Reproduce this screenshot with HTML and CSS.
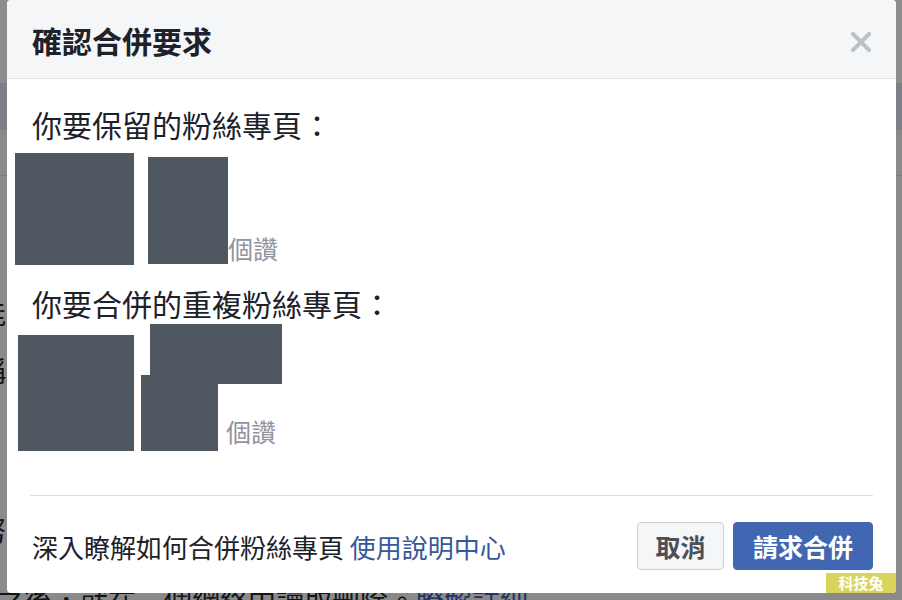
FILE: index.html
```html
<!DOCTYPE html>
<html lang="zh-Hant">
<head>
  <meta charset="UTF-8" />
  <meta name="viewport" content="width=device-width, initial-scale=1.0" />
  <title>確認合併要求</title>
  <link rel="stylesheet" href="styles.css">
</head>
<body>
  <div class="backdrop" aria-hidden="true">
    <div class="page-bar"></div>
    <div class="page-band"></div>
    <div class="page-gap"></div>
    <p class="page-line line-1">能合併名稱相似的粉絲專頁</p>
    <p class="page-line line-2">稱及代表相同事物的粉絲專頁</p>
    <p class="page-line line-3">努力確認合併的內容</p>
    <p class="page-line line-4">之後，就在三個網絡中讀取刪除。<span class="page-link">瞭解詳細</span></p>
  </div>

  <div class="dialog">
    <div class="dialog-header">
      <h1>確認合併要求</h1>
      <button class="close-btn" aria-label="關閉">
        <svg width="20" height="20" viewBox="0 0 20 20">
          <path d="M2 2 L18 18 M18 2 L2 18" stroke="#bcc0c9" stroke-width="4" stroke-linecap="square" fill="none"/>
        </svg>
      </button>
    </div>

    <div class="dialog-body">
      <h2>你要保留的粉絲專頁：</h2>
      <div class="page-row row-keep">
        <div class="mask mask-a"></div>
        <div class="mask mask-b"></div>
        <span class="likes">個讚</span>
      </div>

      <h2 class="second">你要合併的重複粉絲專頁：</h2>
      <div class="page-row row-merge">
        <div class="mask mask-c"></div>
        <div class="mask-stack">
          <div class="mask mask-d"></div>
          <div class="mask mask-e"></div>
        </div>
        <span class="likes likes-merge">個讚</span>
      </div>
    </div>

    <div class="dialog-footer">
      <p class="help">深入瞭解如何合併粉絲專頁 <a href="#">使用說明中心</a></p>
      <div class="actions">
        <button class="btn btn-cancel">取消</button>
        <button class="btn btn-primary">請求合併</button>
      </div>
    </div>
  </div>

  <div class="watermark">科技兔</div>
</body>
</html>
```

FILE: styles.css
```css
:root {
  --text: #1d2129;
  --gray: #90949c;
  --mask: #4f5861;
  --blue: #4267b2;
  --link: #365899;
  --border: #dddfe2;
}

html, body {
  margin: 0;
  height: 600px;
  overflow: hidden;
}

body {
  font-family: "Noto Sans CJK TC", "Noto Sans", sans-serif;
  background-color: #8a8a8a;
  color: var(--text);
  position: relative;
}

/* dimmed page behind the dialog */
.backdrop {
  color: #131416;
  font-size: 28px;
}

.page-bar {
  height: 83px;
  background: #8c8c8c;
}

.page-band {
  height: 47px;
  background: #7c8086;
}

.page-gap {
  height: 45px;
  border-bottom: 1px solid #7b7b7b;
}

.page-line {
  margin: 0;
  line-height: 40px;
  white-space: nowrap;
}

.line-1 { margin: 116px 0 0 -22px; }
.line-2 { margin: 18px 0 0 -22px; }
.line-3 { margin: 120px 0 0 -22px; }
.line-4 { margin: 30px 0 0 -4px; }

.page-link {
  color: #1f3566;
}

/* dialog */
.dialog {
  position: absolute;
  left: 7px;
  top: 0;
  width: 889px;
  height: 593px;
  background: #fff;
  border-radius: 4px;
  overflow: hidden;
  display: flex;
  flex-direction: column;
}

.dialog-header {
  height: 78px;
  background: #f5f6f7;
  border-bottom: 1px solid #e5e5e5;
  display: flex;
  align-items: center;
  justify-content: space-between;
  padding: 0 25px;
}

.dialog-header h1 {
  margin: 0;
  font-size: 30px;
  font-weight: bold;
  line-height: 36px;
  padding-top: 1px;
}

.close-btn {
  background: none;
  border: none;
  padding: 0;
  width: 20px;
  height: 20px;
  margin-top: 6px;
  cursor: pointer;
}

.close-btn svg {
  display: block;
}

.dialog-body {
  padding: 27px 25px 0;
  height: 389px;
}

.dialog-body h2 {
  margin: 0;
  font-size: 30px;
  font-weight: normal;
  line-height: 36px;
}

.dialog-body h2.second {
  margin-top: 20px;
}

.page-row {
  display: flex;
  align-items: flex-end;
}

.row-keep {
  margin-top: 11px;
}

.row-merge {
  margin-top: 3px;
}

.mask {
  background: var(--mask);
  flex-shrink: 0;
}

.mask-a {
  width: 119px;
  height: 112px;
  margin-left: -17px;
}

.mask-b {
  width: 80px;
  height: 107px;
  margin-left: 14px;
  margin-bottom: 1px;
}

.mask-c {
  width: 116px;
  height: 116px;
  margin-left: -14px;
}

.mask-stack {
  display: flex;
  flex-direction: column;
  align-items: flex-start;
  width: 77px;
  margin-left: 7px;
}

.mask-d {
  width: 132px;
  height: 60px;
  margin-left: 9px;
}

.mask-e {
  width: 77px;
  height: 76px;
  margin-top: -9px;
}

.likes {
  color: var(--gray);
  font-size: 25px;
  line-height: 30px;
  margin-bottom: 2px;
  white-space: nowrap;
}

.likes-merge {
  margin-left: 8px;
  margin-bottom: 5px;
}

.dialog-footer {
  margin: 0 23px;
  border-top: 1px solid var(--border);
  padding: 26px 0 23px;
  display: flex;
  align-items: center;
  justify-content: space-between;
}

.help {
  margin: 0 0 0 2px;
  font-size: 26px;
  line-height: 32px;
  padding-top: 1px;
}

.help a {
  color: var(--link);
  text-decoration: none;
}

.actions {
  display: flex;
  gap: 9px;
}

.btn {
  font-family: inherit;
  font-size: 25px;
  font-weight: bold;
  height: 48px;
  border-radius: 4px;
  padding: 0;
  white-space: nowrap;
  cursor: pointer;
}

.btn-cancel {
  width: 87px;
  background: #f5f6f7;
  border: 1px solid #ccd0d5;
  color: #4b4f56;
}

.btn-primary {
  width: 140px;
  background: var(--blue);
  border: 1px solid var(--blue);
  color: #fff;
}

.watermark {
  position: absolute;
  left: 826px;
  top: 573px;
  width: 70px;
  height: 20px;
  background: #d9d55b;
  color: #fff;
  font-size: 15px;
  font-weight: bold;
  line-height: 20px;
  text-align: center;
  border-radius: 0 0 4px 0;
}
```
